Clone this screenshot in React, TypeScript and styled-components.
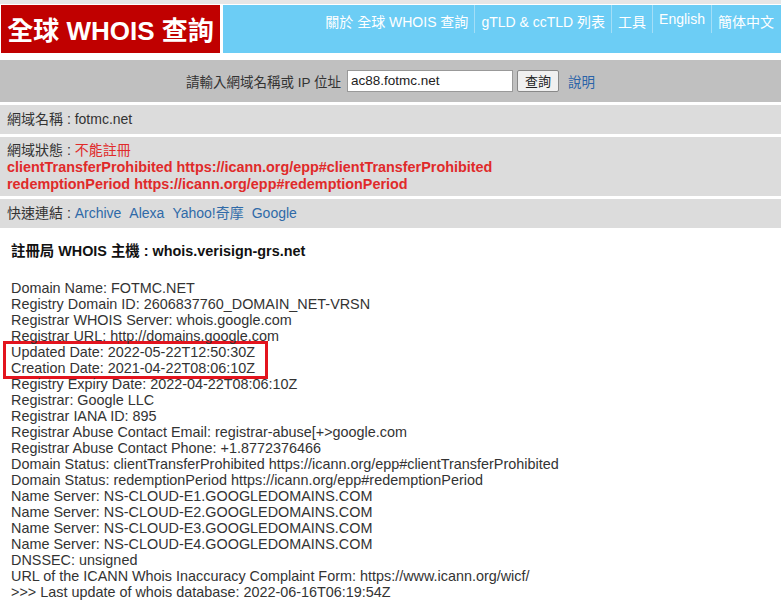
import React from 'react';
import styled, { createGlobalStyle } from 'styled-components';

const GlobalStyle = createGlobalStyle`
    html, body {
        margin: 0;
        padding: 0;
        background: #ffffff;
        font-family: "Liberation Sans", Arial, "Noto Sans CJK TC", sans-serif;
        color: #333;
    }
`;

const TopStrip = styled.div`
    height: 4px;
    background: #e6e6e6;
`;

const Header = styled.div`
    display: flex;
    height: 48px;
    margin-top: 1px;
    padding-left: 1px;
    gap: 3px;
`;

const Logo = styled.div`
    width: 219px;
    background: #c00000;
    color: #fff;
    font-size: 26px;
    font-weight: bold;
    display: flex;
    align-items: center;
    justify-content: center;
    padding-bottom: 2px;
    box-sizing: border-box;
    white-space: nowrap;
`;

const Nav = styled.div`
    flex: 1;
    background: #6ccdf5;
    display: flex;
    justify-content: flex-end;
    align-items: flex-start;
    padding-right: 1px;
`;

const NavItem = styled.a<{ $first?: boolean }>`
    color: #fff;
    font-size: 14px;
    padding: 6px 6px 0 6px;
    height: 28px;
    box-sizing: border-box;
    text-decoration: none;
    border-left: ${p => (p.$first ? 'none' : '1px solid #a3def7')};
    white-space: nowrap;
`;

const SearchBar = styled.div`
    margin-top: 7px;
    height: 42px;
    background: #c0c0c0;
    display: flex;
    align-items: center;
    justify-content: center;
    font-size: 13.5px;
    padding-bottom: 1px;
    box-sizing: border-box;
`;

const SearchLabel = styled.span`
    margin-right: 6px;
`;

const SearchInput = styled.input`
    width: 166px;
    height: 22px;
    box-sizing: border-box;
    border: 1px solid #999;
    font-family: inherit;
    font-size: 13.5px;
    padding: 0 3px;
    color: #222;
    margin-right: 4px;
`;

const SearchButton = styled.button`
    height: 22px;
    width: 42px;
    padding: 0;
    font-family: inherit;
    font-size: 13px;
    background: #f0f0f0;
    border: 1px solid #888;
    border-radius: 2px;
    color: #222;
    margin-right: 9px;
`;

const HelpLink = styled.a`
    color: #2a63a8;
    text-decoration: none;
`;

const InfoList = styled.div`
    display: flex;
    flex-direction: column;
    gap: 3px;
    margin-top: 3px;
`;

const InfoRow = styled.div<{ $padTop?: number; $padBottom?: number }>`
    background: #dcdcdc;
    font-size: 14px;
    line-height: 17px;
    padding: ${p => p.$padTop ?? 6}px 7px ${p => p.$padBottom ?? 6}px;
`;

const Alert = styled.span`
    color: #e02a2a;
`;

const AlertBold = styled.div`
    color: #e02a2a;
    font-weight: bold;
    font-size: 14.4px;
`;

const QuickLink = styled.a`
    color: #2f6aa8;
    text-decoration: none;
    margin-right: 8px;
`;

const WhoisBlock = styled.div`
    padding: 11px 11px 0 11px;
`;

const WhoisTitle = styled.div`
    font-size: 14.4px;
    font-weight: bold;
    color: #111;
    margin-bottom: 20px;
`;

const WhoisText = styled.div`
    font-size: 14.4px;
    line-height: 16px;
    color: #333;
    white-space: pre;
`;

const Highlight = styled.div`
    box-sizing: border-box;
    margin-left: -8px;
    padding-left: 5px;
    width: 265px;
    border: 3px solid #e3141e;
    margin-top: -3px;
    margin-bottom: -3px;
`;

const before = [
    'Domain Name: FOTMC.NET',
    'Registry Domain ID: 2606837760_DOMAIN_NET-VRSN',
    'Registrar WHOIS Server: whois.google.com',
    'Registrar URL: http://domains.google.com',
];

const marked = [
    'Updated Date: 2022-05-22T12:50:30Z',
    'Creation Date: 2021-04-22T08:06:10Z',
];

const after = [
    'Registry Expiry Date: 2022-04-22T08:06:10Z',
    'Registrar: Google LLC',
    'Registrar IANA ID: 895',
    'Registrar Abuse Contact Email: registrar-abuse[+>google.com',
    'Registrar Abuse Contact Phone: +1.8772376466',
    'Domain Status: clientTransferProhibited https://icann.org/epp#clientTransferProhibited',
    'Domain Status: redemptionPeriod https://icann.org/epp#redemptionPeriod',
    'Name Server: NS-CLOUD-E1.GOOGLEDOMAINS.COM',
    'Name Server: NS-CLOUD-E2.GOOGLEDOMAINS.COM',
    'Name Server: NS-CLOUD-E3.GOOGLEDOMAINS.COM',
    'Name Server: NS-CLOUD-E4.GOOGLEDOMAINS.COM',
    'DNSSEC: unsigned',
    'URL of the ICANN Whois Inaccuracy Complaint Form: https://www.icann.org/wicf/',
    '>>> Last update of whois database: 2022-06-16T06:19:54Z',
];

const navItems = ['關於 全球 WHOIS 查詢', 'gTLD & ccTLD 列表', '工具', 'English', '簡体中文'];
const quickLinks = ['Archive', 'Alexa', 'Yahoo!奇摩', 'Google'];

export default function App() {
    return (
        <>
            <GlobalStyle />
            <TopStrip />
            <Header>
                <Logo>全球 WHOIS 查詢</Logo>
                <Nav>
                    {navItems.map((n, i) => (
                        <NavItem key={n} $first={i === 0}>{n}</NavItem>
                    ))}
                </Nav>
            </Header>
            <SearchBar>
                <SearchLabel>請輸入網域名稱或 IP 位址</SearchLabel>
                <SearchInput defaultValue="ac88.fotmc.net" />
                <SearchButton>查詢</SearchButton>
                <HelpLink>說明</HelpLink>
            </SearchBar>
            <InfoList>
                <InfoRow>網域名稱 : fotmc.net</InfoRow>
                <InfoRow $padTop={5} $padBottom={3}>
                    網域狀態 : <Alert>不能註冊</Alert>
                    <AlertBold>clientTransferProhibited https://icann.org/epp#clientTransferProhibited</AlertBold>
                    <AlertBold>redemptionPeriod https://icann.org/epp#redemptionPeriod</AlertBold>
                </InfoRow>
                <InfoRow>
                    快速連結 : {quickLinks.map(l => (
                        <QuickLink key={l}>{l}</QuickLink>
                    ))}
                </InfoRow>
            </InfoList>
            <WhoisBlock>
                <WhoisTitle>註冊局 WHOIS 主機 : whois.verisign-grs.net</WhoisTitle>
                <WhoisText>
                    {before.join('\n')}
                    <Highlight>{marked.join('\n')}</Highlight>
                    {after.join('\n')}
                </WhoisText>
            </WhoisBlock>
        </>
    );
}
